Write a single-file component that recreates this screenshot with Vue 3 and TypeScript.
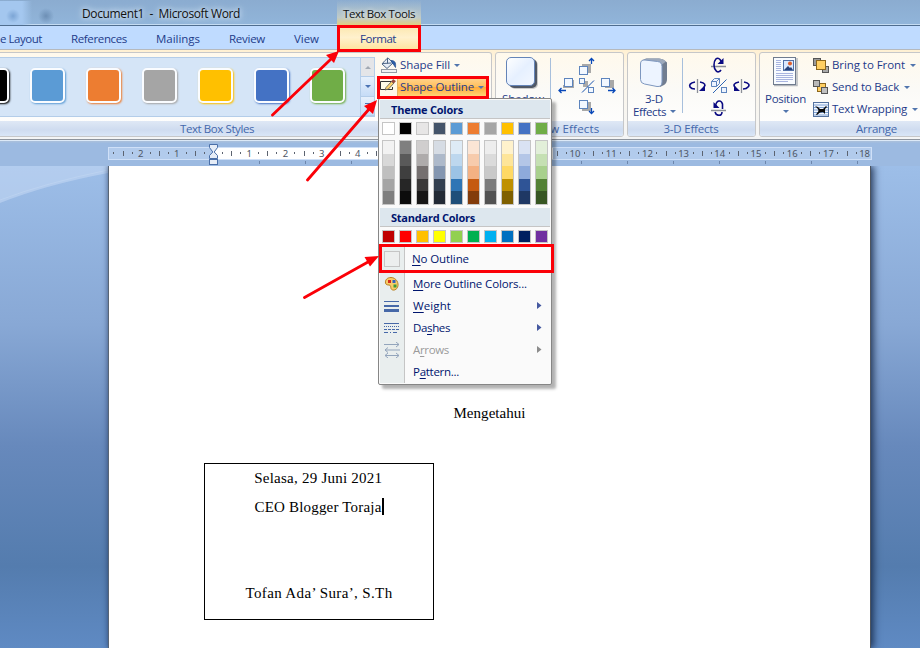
<script setup lang="ts">
import type { Directive } from 'vue'

// Tunes letter spacing so that a label takes the given width in pixels.
const vFit: Directive<HTMLElement, number> = {
  mounted(el, binding) {
    const count = Array.from((el.textContent ?? '').trim()).length
    const natural = el.getBoundingClientRect().width
    el.style.letterSpacing = `${(binding.value - natural) / count}px`
  },
}

interface Tab { label: string; width: number }
const tabs: Tab[] = [
  { label: 'e Layout', width: 42 },
  { label: 'References', width: 56 },
  { label: 'Mailings', width: 44 },
  { label: 'Review', width: 36 },
  { label: 'View', width: 25 },
]

const styles = ['#000000', '#5b9bd5', '#ed7d31', '#a5a5a5', '#ffc000', '#4472c4', '#70ad47']

const theme = ['#ffffff', '#000000', '#e7e6e6', '#44546a', '#5b9bd5', '#ed7d31', '#a5a5a5', '#ffc000', '#4472c4', '#70ad47']
const shades = [
  ['#f2f2f2', '#d8d8d8', '#bfbfbf', '#a5a5a5', '#7f7f7f'],
  ['#7f7f7f', '#595959', '#3f3f3f', '#262626', '#0c0c0c'],
  ['#d0cece', '#aeabab', '#757070', '#3a3838', '#171616'],
  ['#d6dce4', '#adb9ca', '#8496b0', '#323f4f', '#222a35'],
  ['#deebf6', '#bdd7ee', '#9cc3e5', '#2e75b5', '#1e4e79'],
  ['#fbe5d5', '#f7cbac', '#f4b183', '#c55a11', '#833c0b'],
  ['#ededed', '#dbdbdb', '#c9c9c9', '#7b7b7b', '#525252'],
  ['#fff2cc', '#fee599', '#ffd965', '#bf9000', '#7f6000'],
  ['#d9e2f3', '#b4c6e7', '#8eaadb', '#2f5496', '#1f3864'],
  ['#e2efd9', '#c5e0b3', '#a8d08d', '#538135', '#375623'],
]
const standard = ['#c00000', '#ff0000', '#ffc000', '#ffff00', '#92d050', '#00b050', '#00b0f0', '#0070c0', '#002060', '#7030a0']

interface Item { icon: string; pre: string; key: string; post: string; width: number; sub?: boolean; off?: boolean }
const items: Item[] = [
  { icon: 'palette', pre: '', key: 'M', post: 'ore Outline Colors...', width: 114 },
  { icon: 'weight', pre: '', key: 'W', post: 'eight', width: 38, sub: true },
  { icon: 'dashes', pre: 'Da', key: 's', post: 'hes', width: 37, sub: true },
  { icon: 'arrows', pre: 'A', key: 'r', post: 'rows', width: 36, sub: true, off: true },
  { icon: '', pre: 'P', key: 'a', post: 'ttern...', width: 46 },
]

const unit = 36.2
const origin = 105
const marks: { x: number; label: string }[] = []
for (let n = -2; n <= 18; n++) {
  if (n !== 0) marks.push({ x: origin + n * unit, label: String(Math.abs(n)) })
}
const halves = Array.from({ length: 21 }, (_, i) => origin + (i - 2.5) * unit)
const dots = Array.from({ length: 42 }, (_, i) => origin + (i / 2 - 2.75) * unit).filter((x) => x < 762)
const stops = Array.from({ length: 14 }, (_, i) => 151 + i * 46)
</script>

<template>
  <div class="word">
    <header class="title">
      <div class="orb"></div>
      <span v-fit="158" class="caption">Document1&nbsp; -&nbsp; Microsoft Word</span>
      <div class="context"><span v-fit="72">Text Box Tools</span></div>
    </header>

    <nav class="tabs">
      <div class="tablist">
        <span v-for="t in tabs" :key="t.label" v-fit="t.width">{{ t.label }}</span>
      </div>
      <div class="active"><span v-fit="36">Format</span></div>
    </nav>

    <section class="ribbon">
      <div class="group g-styles">
        <div class="tools">
          <div class="gallery">
            <div class="chips">
              <i v-for="c in styles" :key="c" class="chip" :style="{ background: c, '--glow': c }"></i>
            </div>
            <div class="scroll">
              <b class="dim"><svg width="14" height="18"><path d="M4 11h6L7 8z" fill="#a2a9b3" /></svg></b>
              <b><svg width="14" height="18"><path d="M4 8h6L7 11z" fill="#4a73b4" /></svg></b>
              <b><svg width="14" height="18"><path d="M4 6h7v1H4zM4 9h6L7 12z" fill="#4a73b4" /></svg></b>
            </div>
          </div>
          <div class="shape-cmds">
            <div class="cmd">
              <svg class="ic" width="18" height="16" viewBox="0 0 18 16">
                <path d="M5 3.500 8 .8l5 5.200-6 5.500-5-4.500z" fill="#e8eef6" stroke="#4d6585" />
                <path d="M7.500 1v5.500M3 6.500 11.500 6" stroke="#4d6585" fill="none" />
                <path d="M11 3.500c4 0 5 2 4.500 7-1-1-1.500-3-3-4z" fill="#2d5ea8" stroke="#234c8b" stroke-width=".7" />
                <rect x="1.500" y="12.500" width="15" height="3" fill="#f1f1f1" stroke="#939ba5" />
              </svg>
              <span v-fit="50">Shape Fill</span><i class="car"></i>
            </div>
            <div class="cmd hot">
              <span class="pencil">
                <svg width="18" height="16" viewBox="0 0 18 16">
                  <path d="M11 2.500H.5v8h12V8" fill="#fffbe6" stroke="#333" />
                  <path d="M6 8.500 11.500 2.500l2.500 1.500L8.500 10l-3.500 1z" fill="#ffd56e" stroke="#555" stroke-width=".8" />
                  <path d="m11.500 2.500 1.500-2 2.500 1.500L14 4z" fill="#a44b3a" stroke="#733" stroke-width=".5" />
                </svg>
              </span>
              <span v-fit="74">Shape Outline</span><i class="car"></i>
            </div>
          </div>
        </div>
        <footer class="glabel"><span v-fit="74">Text Box Styles</span></footer>
      </div>

      <div class="group g-shadow">
        <div class="tools">
          <div class="big shadow-btn">
            <svg width="36" height="34" viewBox="0 0 36 34">
              <defs><linearGradient id="sq" x1="0" y1="0" x2="1" y2="1"><stop offset="0" stop-color="#fff" /><stop offset=".5" stop-color="#e6f0ff" /><stop offset="1" stop-color="#f3f8ff" /></linearGradient></defs>
              <rect x="6" y="4" width="28" height="29" rx="5" fill="#999" opacity=".5" />
              <rect x="5" y="3" width="28" height="29" rx="5" fill="#505866" />
              <rect x="2.500" y="1.500" width="28" height="28" rx="4.500" fill="url(#sq)" stroke="#6484b8" />
            </svg>
            <span v-fit="42">Shadow</span>
          </div>
          <i class="rule"></i>
          <svg class="nudge" width="60" height="60" viewBox="0 0 60 60">
            <g fill="#a8a8a8"><path d="M24 7h9v9h-9zM9 23h7v8H5v-3h4zM24 45h9v9h-9zM47 23h9v8h-9z" /></g>
            <g fill="#f3f8ff" stroke="#5d84bd">
              <rect x="21.500" y="9.500" width="8" height="8" />
              <rect x="6.500" y="21.500" width="8" height="8" />
              <rect x="21.500" y="43.500" width="8" height="8" />
              <rect x="43.500" y="21.500" width="8" height="8" />
            </g>
            <path d="M25 24h5v6h-5z" fill="#aaa" />
            <g fill="#f3f8ff" stroke="#5d84bd"><rect x="21.500" y="21.500" width="5" height="5" /><rect x="30.500" y="30.500" width="5" height="5" /></g>
            <path d="m24 35.500 12-12" stroke="#1853b0" />
            <path d="M33.500 1.500V7M31 4l2.500-2.500L36 4M33.500 51v5M31 54l2.500 2.500L36 54M8 33.500H1M3.500 31 1 33.500 3.500 36M50 33.500h7M54.500 31l2.500 2.500-2.500 2.500" stroke="#0747b8" fill="none" stroke-width="1.300" />
          </svg>
        </div>
        <footer class="glabel"><span v-fit="84">Shadow Effects</span></footer>
      </div>

      <div class="group g-3d">
        <div class="tools">
          <div class="big three-btn">
            <svg width="34" height="32" viewBox="0 0 34 32">
              <path d="M6 3 9 1.500h13q5 .5 8 4V22q0 4-3 6l-4 2z" fill="#717d90" />
              <path d="M7 3 10 1.500h12q4 0 7 3l-4 3z" fill="#9da9bc" />
              <path d="m8 3 12.500 1.500q4.500.5 4.500 5v15.500q0 5-5 4.500L7.500 27q-4-.7-4-4.500V7q0-4.500 4.500-4z" fill="#edf4ff" stroke="#7e97bf" />
            </svg>
            <span v-fit="18">3-D</span>
            <div class="line"><span v-fit="33">Effects</span><i class="car"></i></div>
          </div>
          <i class="rule"></i>
          <svg class="tilt" width="62" height="62" viewBox="0 0 62 62">
            <path d="M23 12.500h15M23 56.500h15M9.500 25v14M53.500 25v14" stroke="#8b8f98" stroke-width="1.300" />
            <g fill="none" stroke="#0a0a82" stroke-width="1.600">
              <path d="M33 16c-3 4.500-7 0-7-5s3-9 6-5.500l2 3" />
              <path d="M27 58c1 4 7 5 7 0M27.500 52c1-6 5.500-6.500 7-2v5" />
              <path d="M7 28c-5 1-6 3-5 5 1 1.500 3 2 5 2M12 28c5 1 6 3 4 5" />
              <path d="M56 28c5 1 6 3 4 5-1 1.500-3 2-5 2M51 28c-5 1-6 3-4 5" />
            </g>
            <path d="M35.500 4v6h-6zM25.500 48v6h6zM17 31v6h-6zM46 31v6h6z" fill="#0a0a82" />
            <g fill="#edf4ff" stroke="#5d84bd"><path d="M23.500 27.500h5v5h-5zM23.500 27.500l3-3h5l-3 3M31.500 24.500v5l-3 3" /><rect x="33.500" y="33.500" width="5" height="5" /></g>
            <path d="M25 39 38.500 25.500" stroke="#2e65b4" />
          </svg>
        </div>
        <footer class="glabel"><span v-fit="55">3-D Effects</span></footer>
      </div>

      <div class="group g-arrange">
        <div class="tools">
          <div class="big pos-btn">
            <svg width="26" height="31" viewBox="0 0 26 31">
              <path d="M2 29.500h23V2" fill="none" stroke="#b3b7bd" stroke-width="1.500" />
              <rect x="1.500" y="1.500" width="22" height="27" fill="#f8fbff" stroke="#6f7b8e" />
              <path d="M4 4.500h5M4 6.500h5M4 8.500h5M4 10.500h5M4 12.500h5M4 14.500h5M4 17.500h17M4 19.500h17M4 21.500h17M4 23.500h17M4 25.500h12" stroke="#a9b5e0" />
              <rect x="11.500" y="4.500" width="10" height="10" fill="#dceaff" stroke="#5371a8" />
              <path d="m12 14 4-4 2 2 1-1 2 3z" fill="#29437a" /><circle cx="18" cy="7.500" r="2" fill="#e0602e" />
            </svg>
            <span v-fit="41">Position</span>
            <i class="car"></i>
          </div>
          <div class="list">
            <div class="cmd">
              <svg width="16" height="15" viewBox="0 0 16 15"><rect x=".5" y=".5" width="7" height="7" fill="#999" stroke="#555" /><rect x="9.500" y="8.500" width="6" height="6" fill="#aaa" stroke="#555" /><rect x="3.500" y="2.500" width="9" height="9" fill="#ffcf62" stroke="#8d671c" /></svg>
              <span v-fit="73">Bring to Front</span><i class="car"></i>
            </div>
            <div class="cmd">
              <svg width="16" height="15" viewBox="0 0 16 15"><rect x="4.500" y="3.500" width="8" height="8" fill="#ffcf62" stroke="#8d671c" /><rect x=".5" y=".5" width="6" height="6" fill="#b9b9b9" stroke="#555" /><rect x="8.500" y="7.500" width="6" height="6" fill="#c0c0c0" stroke="#555" /></svg>
              <span v-fit="67">Send to Back</span><i class="car"></i>
            </div>
            <div class="cmd">
              <svg width="16" height="15" viewBox="0 0 16 15"><rect x=".5" y=".5" width="15" height="14" fill="#f2f7ff" stroke="#54729f" /><path d="M1 3h14M1 5.500h14M1 8h14M1 10.500h14M1 13h14" stroke="#7ca0d2" /><path d="m2 4 3 1 2 2h3l3-3 1 1-2 2v5l-2-2-3 .5L4 13l-1-.5L5.500 9 5 7z" fill="#0a0a0a" /></svg>
              <span v-fit="75">Text Wrapping</span><i class="car"></i>
            </div>
          </div>
        </div>
        <footer class="glabel"><span v-fit="41">Arrange</span></footer>
      </div>
    </section>

    <section class="ruler">
      <svg width="764" height="25" viewBox="0 0 764 25">
        <rect x=".5" y=".5" width="763" height="12" fill="#b2cbec" stroke="#cfe0f8" />
        <rect x="105" y="1" width="340" height="11" fill="#fff" />
        <g fill="#5c6370"><rect v-for="x in halves" :key="x" :x="Math.round(x)" y="4" width="1" height="5" /></g>
        <g fill="#5c6370"><rect v-for="x in dots" :key="x" :x="Math.round(x)" y="5" width="1" height="2" /></g>
        <g class="num"><text v-for="m in marks" :key="m.x" :x="m.x" y="10">{{ m.label }}</text></g>
        <g fill="#6c86ac"><rect v-for="x in stops" :key="x" :x="x" y="14" width="1" height="3" /></g>
        <g transform="translate(101 -3)" fill="#e6edf7" stroke="#4a6fa8">
          <path d="M.5.500h8v3L5.200 8 8.500 11.500v3h-8v-3L3.800 8 .5 3.500z" />
          <rect x=".5" y="15.500" width="8" height="5" />
        </g>
      </svg>
    </section>

    <main class="desk">
      <svg class="swoosh" width="108" height="40" viewBox="0 0 108 40">
        <path d="M0 0H108V7Q45 19 0 37z" fill="#c9dcf5" opacity=".5" />
        <path d="M0 34Q45 17 108 4" fill="none" stroke="#cfe0f6" opacity=".3" />
      </svg>
      <article class="page">
        <p class="know"><span v-fit="72">Mengetahui</span></p>
        <div class="box">
          <p><span v-fit="128">Selasa, 29 Juni 2021</span></p>
          <p class="typed"><span v-fit="127">CEO Blogger Toraja</span><i class="caret"></i></p>
          <p class="sign"><span v-fit="147">Tofan Ada’ Sura’, S.Th</span></p>
        </div>
      </article>
    </main>

    <div class="menu">
      <h4><span v-fit="72">Theme Colors</span></h4>
      <div class="row">
        <i v-for="c in theme" :key="c" class="sw" :style="{ background: c }"></i>
      </div>
      <div class="row tall">
        <div v-for="(col, i) in shades" :key="i" class="col">
          <i v-for="c in col" :key="c" :style="{ background: c }"></i>
        </div>
      </div>
      <h4><span v-fit="84">Standard Colors</span></h4>
      <div class="row std">
        <i v-for="c in standard" :key="c" class="sw" :style="{ background: c }"></i>
      </div>
      <div class="items">
        <div class="item none">
          <span class="mi"><i class="empty"></i></span>
          <span v-fit="57"><u>N</u>o Outline</span>
        </div>
        <div v-for="it in items" :key="it.key" class="item" :class="{ off: it.off }">
          <span class="mi">
            <svg v-if="it.icon === 'palette'" width="16" height="16" viewBox="0 0 16 16">
              <path d="M7 1.500C3 1.500 1 4 1.500 7c.5 2 2 2 3.500 2 2 0 1.500 2 2 3.500 1 2.500 5 2 6.500-1C15.500 7 12 1.500 7 1.500z" fill="#f8cc68" stroke="#b98325" />
              <path d="M4 4h3v3H4z" fill="#d32b1e" /><path d="M8.500 4h3v3h-3z" fill="#3663b8" /><path d="M9.500 8.500h3v3h-3z" fill="#3d9b35" />
            </svg>
            <svg v-else-if="it.icon === 'weight'" width="15" height="16"><path d="M0 3.500h16" stroke="#4668a8" /><path d="M0 8h16" stroke="#4668a8" stroke-width="2" /><path d="M0 12.500h16" stroke="#4668a8" stroke-width="3" /></svg>
            <svg v-else-if="it.icon === 'dashes'" width="15" height="16" stroke="#4668a8"><path d="M0 3.500h16" /><path d="M0 6.500h16" stroke-dasharray="1 1" /><path d="M0 9.500h16" stroke-dasharray="3 1" /><path d="M0 12.500h16" stroke-dasharray="4 2 1 2" /></svg>
            <svg v-else-if="it.icon === 'arrows'" width="16" height="16" stroke="#93a5bc" fill="none"><path d="M0 2.500h15M12 0l3 2.500L12 5M1 8h15M4 5.500 1 8l3 2.500M1 13.500h14M4 11l-3 2.500L4 16M12 11l3 2.500-3 2.500" /></svg>
          </span>
          <span v-fit="it.width">{{ it.pre }}<u>{{ it.key }}</u>{{ it.post }}</span>
          <svg v-if="it.sub" class="more" width="5" height="8"><path d="M0 0 4.500 3.500 0 7z" :fill="it.off ? '#8c8c8c' : '#4559a0'" /></svg>
        </div>
      </div>
    </div>

    <svg class="callouts" width="920" height="648" viewBox="0 0 920 648">
      <g fill="none" stroke="#fb0007" stroke-width="3">
        <rect x="338.500" y="26.500" width="81" height="24" />
        <rect x="378.500" y="77.500" width="109" height="20" />
        <rect x="380.500" y="245.500" width="172" height="26" />
        <path d="M272.500 115 330 60M307.500 180 370 108M304.500 297.500 368 262" stroke-linecap="round" stroke-width="2.800" />
      </g>
      <g fill="#fb0007">
        <path d="M339 51 334 63 326 55z" />
        <path d="M377 100 373 114 364 106z" />
        <path d="M379 256 370 266.500 364.500 257z" />
      </g>
    </svg>
  </div>
</template>

<style>
body { overflow: hidden; }
</style>

<style scoped>
.word { position: relative; width: 920px; height: 648px; overflow: hidden; display: flex; flex-direction: column; font: 11.500px/16px 'Open Sans', 'Noto Sans', sans-serif; color: #1e3b8a; }
.word span { white-space: pre; }
svg { display: block; flex: none; }
p, h4 { margin: 0; }
i { font-style: normal; flex: none; display: block; }

.title { height: 26px; flex: none; box-sizing: border-box; display: flex; align-items: center; background: linear-gradient(180deg, #8bacd0, #91b5da); border-bottom: 1px solid #4f6d8f; box-shadow: inset 0 -1px #c4dcf3; color: #111; }
.orb { width: 82px; height: 24px; flex: none; background: radial-gradient(circle at 13px 15px, #7ca5d5 0, transparent 7px), radial-gradient(circle at 46px 15px, #6d8fb5 0, transparent 8px), linear-gradient(90deg, #a4c7ef 0 22px, transparent 32px); }
.caption { font-size: 12px; text-shadow: 0 0 5px #e4eefa, 0 0 8px #dbe8f6; padding-top: 3px; }
.context { width: 84px; height: 25px; margin-left: 97px; display: flex; justify-content: center; padding-top: 2px; box-sizing: border-box; align-items: center; background: linear-gradient(180deg, rgba(214, 218, 203, 0) 0, #c0cbc8 70%, #e2cf80 100%); text-shadow: 0 0 4px #f4f4ee; }

.tabs { height: 24px; flex: none; box-sizing: border-box; display: flex; background: #bfdbff; border-bottom: 1px solid #b6b9bd; }
.tablist { display: flex; width: 337px; gap: 29px; align-items: center; padding-top: 3px; box-sizing: border-box; }
.active { width: 83px; display: flex; align-items: center; justify-content: center; padding: 3px 1px 0 0; box-sizing: border-box; background: linear-gradient(180deg, #fbe7af, #fff1cd 50%, #ffe4a0); }

.ribbon { height: 90px; flex: none; box-sizing: border-box; display: flex; gap: 3px; padding: 2px 0 2px; background: linear-gradient(180deg, #fff0d2, #fdf6e8 20%, #f4f5f6); border-bottom: 1px solid #8d949e; }
.group { display: flex; flex-direction: column; box-sizing: border-box; flex: none; border: 1px solid #c6c7c9; border-radius: 3px; background: linear-gradient(180deg, #fff9ec, #fbfaf7 45%, #fff); overflow: hidden; }
.g-styles { width: 492px; border-left: 0; border-radius: 0 3px 3px 0; }
.g-shadow { width: 129px; }
.g-3d { width: 129px; }
.g-arrange { width: 240px; }
.tools { height: 68px; flex: none; display: flex; }
.glabel { flex: 1; display: flex; align-items: center; justify-content: center; color: #4468ac; background: linear-gradient(180deg, #dfe8f5, #cfdcf0 55%, #dbe7f8); }
.g-styles .glabel { padding-right: 57px; }
.g-shadow .glabel { padding-left: 0; padding-right: 4px; }
.g-3d .glabel { padding-right: 1px; }
.g-arrange .glabel { padding-right: 5px; }

.gallery { height: 60px; width: 375px; margin-top: 4px; flex: none; box-sizing: border-box; display: flex; border: 1px solid #b4cde9; border-left: 0; background: #d5e5f7; overflow: hidden; }
.chips { display: flex; gap: 21px; width: 360px; flex: none; align-items: center; overflow: hidden; padding-bottom: 3px; box-sizing: border-box; }
.chips::before { content: ''; width: 0; margin-left: -47px; flex: none; }
.chip { width: 31px; height: 31px; border: 2px solid #fafcff; border-radius: 5px; box-shadow: 1px 1px 2px var(--glow); }
.scroll { display: flex; flex-direction: column; width: 15px; }
.scroll b { flex: 1; border-left: 1px solid #b4cde9; border-bottom: 1px solid #b4cde9; background: linear-gradient(180deg, #e6f0fc, #c6dcf7); }
.scroll .dim { background: #e4e5e8; }
.shape-cmds { display: flex; flex-direction: column; padding: 1px 0 0 5px; }
.cmd { display: flex; align-items: center; height: 22px; }
.shape-cmds .cmd { width: 108px; }
.shape-cmds .cmd > span:last-of-type { margin-left: 2px; }
.hot { background: linear-gradient(180deg, #ffd899, #ffbf5c 50%, #ffab3b 52%, #ffdc83); }
.pencil { background: #fff8e8; height: 20px; width: 18px; display: flex; align-items: center; border-right: 1px solid #e2b663; box-sizing: border-box; }
.car { border: 3px solid transparent; border-top: 3px solid #5175ad; border-bottom: 0; margin-left: 4px; width: 0; height: 0; }

.big { display: flex; flex-direction: column; align-items: center; line-height: 13px; }
.shadow-btn { width: 54px; padding-top: 3px; }
.shadow-btn svg { margin-right: 3px; }
.shadow-btn span { margin-top: 2px; }
.rule { width: 1px; height: 55px; margin-top: 5px; background: #a7bfdc; }
.nudge { margin: 4px 0 0 7px; }
.three-btn { width: 54px; padding-top: 4px; }
.three-btn svg { margin-right: 2px; }
.three-btn > span { margin: 3px 2px 0 0; }
.line { display: flex; align-items: center; }
.three-btn .line { padding-right: 1px; }
.tilt { margin: 1px 0 0 5px; }
.pos-btn { width: 51px; padding-top: 3px; }
.pos-btn svg { margin-right: 2px; }
.pos-btn > span { margin-top: 5px; }
.pos-btn .car { margin: 5px 0 0; }
.list { padding: 1px 0 0 2px; }
.list .cmd svg { margin-right: 3px; }
.list .car { margin-left: 5px; }

.ruler { height: 26px; flex: none; box-sizing: border-box; padding: 7px 0 0 108px; background: linear-gradient(180deg, #dce9f7 0 1px, #a8bfdc 1px 2px, #9cbae1 3px); }
.ruler svg { overflow: visible; }
.num { font-size: 9.500px; fill: #4d5665; text-anchor: middle; font-family: 'Noto Sans', sans-serif; }

.desk { flex: 1; display: flex; background: linear-gradient(180deg, #9dbee8 0, #88a8d5 33%, #6789bc 58%, #547cae 83%, #5f8ac3 100%); }
.page { width: 763px; box-sizing: border-box; background: #fff; border-left: 1px solid #596575; border-right: 1px solid #4d545e; box-shadow: 3px 0 7px rgba(18, 35, 65, .75), -1px 0 4px rgba(20, 40, 80, .3); clip-path: inset(0 -20px 0 -20px); color: #000; font: 15px/18px 'Liberation Serif', serif; display: flex; flex-direction: column; }
.know { padding: 238px 0 0 344.500px; }
.box { width: 230px; height: 157px; box-sizing: border-box; margin: 41px 0 0 95px; border: 1px solid #000; display: flex; flex-direction: column; align-items: center; padding-top: 5px; }
.box p { height: 29px; padding-right: 1.500px; display: flex; }
.box .typed { align-items: flex-start; padding-right: 0; }
.caret { width: 2px; height: 17px; background: #000; }
.box .sign { margin-top: 57px; padding-right: 0; }

.menu { position: absolute; left: 378px; top: 98px; width: 174px; height: 287px; box-sizing: border-box; padding: 1px; border: 1px solid #868686; border-radius: 2px; background: #fafafa; box-shadow: 4px 4px 3px rgba(0, 0, 0, .3); color: #00156e; display: flex; flex-direction: column; }
.menu h4 { height: 19px; flex: none; box-sizing: border-box; padding: 2px 0 0 11px; display: flex; align-items: center; font-size: 11px; background: #dde7ee; border-bottom: 1px solid #c5c5c5; }
.row { display: flex; gap: 4px; padding: 3px 0 0 2px; height: 21px; flex: none; box-sizing: border-box; }
.tall { height: 68px; padding-top: 0; }
.sw { width: 13px; height: 13px; box-sizing: border-box; border: 1px solid #c5c5c5; }
.col { width: 13px; height: 65px; box-sizing: border-box; border: 1px solid #c5c5c5; display: flex; flex-direction: column; }
.col i { flex: 1; }
.std { height: 19px; }
.items { flex: 1; display: flex; flex-direction: column; background: linear-gradient(90deg, #e9eeee 0 24px, #c5c5c5 24px 25px, #fafafa 25px); }
.item { height: 22px; flex: none; display: flex; align-items: center; padding-bottom: 1px; box-sizing: border-box; }
.none { height: 27px; padding-bottom: 2px; }
.mi { width: 33px; display: flex; flex: none; padding-left: 4px; box-sizing: border-box; }
.none .mi { width: 32px; }
.empty { width: 14px; height: 14px; border: 1px solid #c5c5c5; background: #eceeee; }
.item u { text-underline-offset: 2px; text-decoration-thickness: 1px; }
.more { margin-left: auto; margin-right: 8px; }
.off { color: #9b9b9b; }

.callouts { position: absolute; left: 0; top: 0; }
</style>
